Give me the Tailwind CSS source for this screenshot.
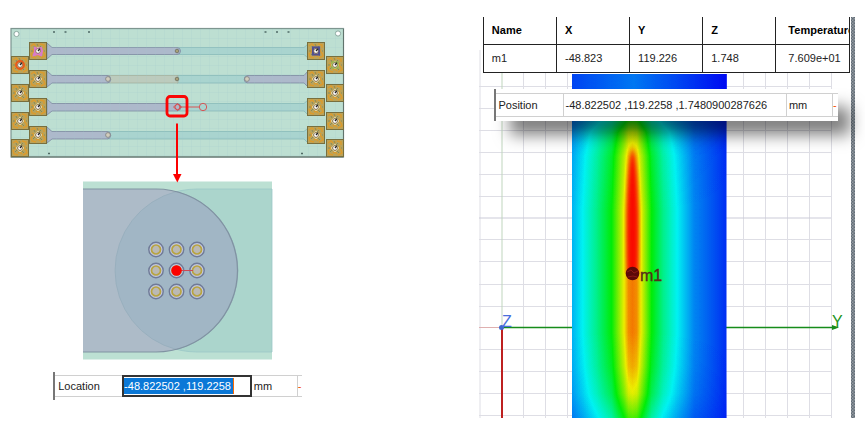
<!DOCTYPE html>
<html lang="en">
<head>
  <meta charset="UTF-8" />
  <meta name="viewport" content="width=device-width, initial-scale=1.0"/>
  <title>Via temperature marker</title>
  <script src="https://cdn.jsdelivr.net/npm/@tailwindcss/browser@4"></script>
</head>
<body class="bg-white text-[#222] font-['Liberation_Sans',Arial,sans-serif] text-[11px] leading-4">
  <main class="grid grid-cols-[355fr_124fr_386fr] pt-[17px]">

    <!-- Board layout and via detail -->
    <section class="col-start-1">
      <svg viewBox="0 17 355 344" class="block w-full" role="img" aria-label="Board layout with via detail">
        <defs>
          <pattern id="mesh" x="11" y="29" width="9" height="9" patternUnits="userSpaceOnUse">
            <path d="M0 0H9M0 0V9" stroke="#9dc6c9" stroke-width="0.7" opacity="0.45"/>
          </pattern>
          <g id="pad">
            <rect x="0.5" y="0.5" width="17" height="17" fill="#b9a35c" stroke="#796f3d"/>
            <path d="M2 4l3-2 2 2M11 2l4 1v3M2 11l1 4 4 1M15 11l1 3-4 2M3 7l2 2-2 2M14 7l-1 2 2 2M7 14l2-1 2 2M8 3h2" stroke="#dc9b2c" stroke-width="1.4" fill="none"/>
            <path d="M5 4l1 2M12 4l-2 2M4 13l2-2M13 14l-2-2M2 9h2M15 9h1M8 2l1 2" stroke="#858b5c" stroke-width="1" fill="none"/>
            <path d="M5 9l4-4 4 4-4 4Z" stroke="#d9cf9e" stroke-width="1" fill="none"/>
          </g>
          <g id="hole">
            <circle cx="9" cy="9" r="2.3" fill="#fff" stroke="#775f46" stroke-width="0.7"/>
            <path d="M9 9l2-2.4" stroke="#222" stroke-width="1.3"/>
          </g>
          <g id="via">
            <circle r="7.2" fill="#c3c8de" stroke="#6f7a97" stroke-width="1.4"/>
            <circle r="4.5" fill="#bbb9b4" stroke="#b8a440" stroke-width="1.7"/>
          </g>
        </defs>

        <rect x="11" y="28.5" width="332.5" height="128.5" fill="#bddfd2"/>

        <!-- Traces -->
        <g stroke-width="0.7">
          <g fill="#a9d4cf" stroke="#82b6b6">
            <path d="M177 47.5H304L308 44V58L304 54.5H177Z"/>
            <path d="M177 75.5H248V83H177Z"/>
            <path d="M177 103.5H304L308 100V115L304 111H177Z"/>
            <path d="M107 131.5H304L308 128V143L304 139H107Z"/>
          </g>
          <path d="M107 75.5H178V83H107Z" fill="#bccbbd" stroke="#a1ad9a"/>
          <g fill="#adb9cb" stroke="#74809a">
            <path d="M47 43L52 47.5H177a3.5 3.5 0 0 1 0 7H52L47 59Z"/>
            <path d="M47 71L52 75.5H107a3.7 3.7 0 0 1 0 7.5H52L47 87Z"/>
            <path d="M47 99L52 103.5H177a3.7 3.7 0 0 1 0 7.5H52L47 115Z"/>
            <path d="M47 127L52 131.5H107a3.7 3.7 0 0 1 0 7.5H52L47 143Z"/>
            <path d="M308 71L304 75.5H248a3.7 3.7 0 0 0 0 7.5H304L308 87Z"/>
          </g>
        </g>
        <rect x="11" y="28.5" width="332.5" height="128.5" fill="url(#mesh)"/>
        <rect x="11" y="28.5" width="332.5" height="128.5" fill="none" stroke="#7e9690" stroke-width="1.2"/>
        <path d="M11 157H343.5V29" fill="none" stroke="#62736d" stroke-width="1"/>

        <!-- Trace end vias -->
        <g stroke-width="0.8">
          <g fill="#a9a077" stroke="#6d6e60">
            <circle cx="177" cy="51" r="1.8"/><circle cx="177" cy="79" r="1.8"/>
          </g>
          <g fill="#d2cdbd" stroke="#7f8180">
            <circle cx="108" cy="79" r="2.4"/><circle cx="247" cy="79" r="2.4"/><circle cx="108" cy="135" r="2.4"/>
          </g>
        </g>

        <!-- Inner pads -->
        <g>
          <use href="#pad" x="29" y="42"/><use href="#pad" x="29" y="70"/>
          <use href="#pad" x="29" y="98"/><use href="#pad" x="29" y="126"/>
          <use href="#pad" x="307" y="42"/><use href="#pad" x="307" y="70"/>
          <use href="#pad" x="307" y="98"/><use href="#pad" x="307" y="126"/>
        </g>
        <!-- Outer pads -->
        <g>
          <use href="#pad" x="11" y="56"/><use href="#pad" x="11" y="84"/>
          <use href="#pad" x="11" y="112"/><use href="#pad" x="11" y="139"/>
          <use href="#pad" x="326" y="56"/><use href="#pad" x="326" y="84"/>
          <use href="#pad" x="326" y="112"/><use href="#pad" x="326" y="139"/>
        </g>
        <g fill="none" stroke-width="2.2">
          <path d="M35 48l2 1 4-1 1 3-1 4-3-1-4 1 1-3Z" stroke="#da7ac9"/>
          <circle cx="20" cy="65" r="3.8" stroke="#e75a1c"/>
          <rect x="313" y="47.5" width="6" height="7" stroke="#505092"/>
          <rect x="332" y="62" width="6" height="6" stroke="#94bd4e" stroke-width="1.2"/>
        </g>
        <g>
          <use href="#hole" x="29" y="42"/><use href="#hole" x="29" y="70"/>
          <use href="#hole" x="29" y="98"/><use href="#hole" x="29" y="126"/>
          <use href="#hole" x="307" y="42"/><use href="#hole" x="307" y="70"/>
          <use href="#hole" x="307" y="98"/><use href="#hole" x="307" y="126"/>
          <use href="#hole" x="11" y="56"/><use href="#hole" x="11" y="84"/>
          <use href="#hole" x="11" y="112"/><use href="#hole" x="11" y="139"/>
          <use href="#hole" x="326" y="56"/><use href="#hole" x="326" y="84"/>
          <use href="#hole" x="326" y="112"/><use href="#hole" x="326" y="139"/>
        </g>

        <!-- Mounting holes and fiducials -->
        <g fill="#fff" stroke="#8da9a1">
          <circle cx="16.5" cy="34" r="2.6"/><circle cx="338" cy="33.5" r="2.6"/>
        </g>
        <path d="M53 32h2M64.5 32h2M88 32h2M264.5 32h2M276 32h2M287.5 32h2M48 153.5h2M301 153.5h2" stroke="#4f6a65" stroke-width="1.5"/>

        <!-- Selected via and arrow to detail -->
        <g fill="none" stroke="#dd4747" stroke-width="0.9">
          <path d="M173.5 107l4-3.5 4 3.5-4 3.5ZM179 107H199"/>
          <circle cx="177.5" cy="107" r="2.5"/>
          <circle cx="203" cy="107" r="3.7"/>
        </g>
        <rect x="167" y="96.5" width="20" height="19.5" rx="3" fill="none" stroke="#fa0505" stroke-width="2.8"/>

        <rect x="83" y="181.5" width="189" height="178" fill="#bce0d3"/>
        <path d="M272 189H197a81.5 81.5 0 0 0 0 163H272Z" fill="#abd5cc" stroke="#9cc8c8" stroke-width="0.8"/>
        <path d="M83 189H156a81.5 81.5 0 0 1 0 163H83Z" fill="#adbbc8"/>
        <path d="M176.5 191.5A81.5 81.5 0 0 1 176.5 349.5A81.5 81.5 0 0 1 176.5 191.5Z" fill="#a1b6c5" stroke="#93acba" stroke-width="0.7"/>
        <path d="M83 189H156a81.5 81.5 0 0 1 0 163H83" fill="none" stroke="#8093a2" stroke-width="1.2"/>
        <g>
          <use href="#via" x="156" y="249.5"/><use href="#via" x="176.5" y="249.5"/><use href="#via" x="197" y="249.5"/>
          <use href="#via" x="156" y="270.5"/><use href="#via" x="176.5" y="270.5"/><use href="#via" x="197" y="270.5"/>
          <use href="#via" x="156" y="291.5"/><use href="#via" x="176.5" y="291.5"/><use href="#via" x="197" y="291.5"/>
        </g>
        <path d="M177 270.5H193" stroke="#cc4a55" stroke-width="1"/>
        <circle cx="176.5" cy="270.5" r="5.2" fill="#fc0000"/>
        <path d="M177 123.5V175" stroke="#fc0000" stroke-width="2"/>
        <path d="M173 174h8.5L177.3 182.5Z" fill="#fc0000"/>
      </svg>

      <!-- Location property -->
      <div class="mt-[11px] ml-[15%] w-[70%] border-l-2 border-[#777]">
        <div class="grid grid-cols-[67fr_130fr_46fr_4fr] h-7 py-[3px]">
          <label for="location" class="flex items-center border-y border-[#d0d0d0] pl-[3px]">Location</label>
          <div class="flex items-center border-2 border-[#333] h-[22px]">
            <input id="location" type="text" value="-48.822502 ,119.2258" class="w-[110px] h-4 bg-[#0b78d7] text-white border-r border-orange-500 outline-none"/>
          </div>
          <span class="flex items-center border-y border-r border-[#d0d0d0] pl-[2px]">mm</span>
          <span class="flex items-center border-y border-[#d0d0d0] text-orange-600">-</span>
        </div>
      </div>
    </section>

    <!-- Temperature plot -->
    <section class="col-start-3 relative overflow-hidden">
      <svg viewBox="479 17 386 401" class="block w-full" role="img" aria-label="Temperature plot with marker m1">
        <defs>
          <linearGradient id="across">
            <stop offset="0" stop-color="#2e2e2e"/>
            <stop offset="0.07" stop-color="#404040"/>
            <stop offset="0.16" stop-color="#5c5c5c"/>
            <stop offset="0.257" stop-color="#808080"/>
            <stop offset="0.337" stop-color="#bfbfbf"/>
            <stop offset="0.365" stop-color="#dadada"/>
            <stop offset="0.39" stop-color="#e0e0e0"/>
            <stop offset="0.42" stop-color="#dadada"/>
            <stop offset="0.447" stop-color="#bfbfbf"/>
            <stop offset="0.515" stop-color="#808080"/>
            <stop offset="0.59" stop-color="#5c5c5c"/>
            <stop offset="0.68" stop-color="#404040"/>
            <stop offset="0.79" stop-color="#222"/>
            <stop offset="1" stop-color="#0a0a0a"/>
          </linearGradient>
          <linearGradient id="along" x2="0" y2="1">
            <stop offset="0" stop-opacity="0.8"/>
            <stop offset="0.06" stop-opacity="0.8"/>
            <stop offset="0.13" stop-opacity="0.42"/>
            <stop offset="0.17" stop-opacity="0.2"/>
            <stop offset="0.24" stop-opacity="0.08"/>
            <stop offset="0.4" stop-opacity="0"/>
            <stop offset="0.75" stop-opacity="0"/>
            <stop offset="0.85" stop-opacity="0.06"/>
            <stop offset="0.93" stop-opacity="0.16"/>
            <stop offset="1" stop-opacity="0.34"/>
          </linearGradient>
          <linearGradient id="top">
            <stop offset="0" stop-color="#101010"/>
            <stop offset="0.4" stop-color="#1e1e1e"/>
            <stop offset="0.65" stop-color="#121212"/>
            <stop offset="1" stop-color="#000"/>
          </linearGradient>
          <filter id="soft" x="-1" y="-0.2" width="3" height="1.4">
            <feGaussianBlur stdDeviation="2 4"/>
          </filter>
          <clipPath id="core">
            <rect x="615" y="122" width="35" height="151"/>
          </clipPath>
          <!-- grey level to rainbow scale -->
          <filter id="rainbow" x="0" y="0" width="1" height="1" color-interpolation-filters="sRGB">
            <feComponentTransfer>
              <feFuncR type="table" tableValues="0 0 0 0.93 0.98"/>
              <feFuncG type="table" tableValues="0.04 0.95 0.93 0.93 0.04"/>
              <feFuncB type="table" tableValues="0.95 0.95 0.03 0 0"/>
            </feComponentTransfer>
          </filter>
          <pattern id="hatch" width="3" height="3" patternUnits="userSpaceOnUse">
            <rect width="3" height="3" fill="#929aa1"/>
            <path d="M0 0h1.5v1.5H0zM1.5 1.5H3V3H1.5z" fill="#626c76"/>
          </pattern>
        </defs>

        <!-- Grid -->
        <path d="M480 50V418M523.5 50V418M545.5 50V418M567.5 50V418M743.5 50V418M765.5 50V418M787.5 50V418M809.5 50V418M831.5 50V418M479 86.5H831M479 108.5H831M479 130.5H831M479 152.5H831M479 174.5H831M479 196.5H831M479 239.5H831M479 261.5H831M479 284.5H831M479 306.5H831M479 349.5H831M479 371.5H831M479 393.5H831M479 415.5H831" stroke="#dedee5" stroke-width="1"/>
        <path d="M479 218H831" stroke="#cbcbd8"/>
        <path d="M502 50V327" stroke="#bfd5bd"/>
        <path d="M479 327.5H502" stroke="#dfb0b0"/>

        <path d="M502 327.5H836" stroke="#168c1b" stroke-width="1.7"/>
        <path d="M832 325l7 2.5-7 2.5Z" fill="#168c1b"/>
        <path d="M502 328V418" stroke="#bd2020" stroke-width="2"/>
        <circle cx="501.5" cy="327.5" r="2.5" fill="#4068ce"/>
        <text x="502" y="327" font-size="16" fill="#4970dc">Z</text>
        <text x="832" y="327" font-size="16" fill="#229321">Y</text>

        <!-- Heat map -->
        <g filter="url(#rainbow)">
          <rect x="572" y="74" width="154.5" height="344" fill="url(#across)"/>
          <rect x="572" y="74" width="154.5" height="344" fill="url(#along)"/>
          <rect x="572" y="74" width="154.5" height="20" fill="url(#top)"/>
          <g clip-path="url(#core)">
            <ellipse cx="632.5" cy="235" rx="5.5" ry="85" fill="#fff" filter="url(#soft)"/>
          </g>
        </g>

        <!-- Marker -->
        <circle cx="632.5" cy="273.5" r="6.8" fill="#5d0909"/>
        <path d="M627 272l4-2 3 3 4-2M628 277l5-1 4 1" stroke="#8e1a15" stroke-width="1" fill="none"/>
        <text x="640" y="281" font-size="16" fill="#54301a" stroke="#54301a" stroke-width="0.4">m1</text>

        <rect x="851" y="17" width="4" height="401" fill="url(#hatch)"/>
      </svg>

      <!-- Marker table -->
      <table class="absolute top-0 left-[1%] w-[95%] table-fixed border-collapse bg-white text-left">
        <thead>
          <tr class="h-[27px]">
            <th class="w-[20%] border border-t-0 border-[#222] pl-2 text-black">Name</th>
            <th class="w-[20%] border border-t-0 border-[#222] pl-2 text-black">X</th>
            <th class="w-[20%] border border-t-0 border-[#222] pl-2 text-black">Y</th>
            <th class="w-[20%] border border-t-0 border-[#222] pl-2 text-black">Z</th>
            <th class="border border-t-0 border-[#222] pl-3 text-black overflow-hidden">Temperature</th>
          </tr>
        </thead>
        <tbody>
          <tr class="h-7">
            <td class="border border-[#222] pl-2">m1</td>
            <td class="border border-[#222] pl-2">-48.823</td>
            <td class="border border-[#222] pl-2">119.226</td>
            <td class="border border-[#222] pl-2">1.748</td>
            <td class="border border-[#222] pl-3">7.609e+01</td>
          </tr>
        </tbody>
      </table>

      <!-- Position property -->
      <div class="absolute top-[72px] left-[4%] w-[89%] h-8 py-1 grid grid-cols-[67fr_223fr_46fr_5fr] bg-white border-l-2 border-[#777] shadow-[14px_16px_16px_-2px_rgba(0,0,0,0.5)]">
        <span class="flex items-center border-y border-r border-[#d0d0d0] pl-[2px]">Position</span>
        <span class="flex items-center border-y border-r border-[#d0d0d0] pl-[2px] whitespace-nowrap">-48.822502 ,119.2258 ,1.7480900287626</span>
        <span class="flex items-center border-y border-r border-[#d0d0d0] pl-[2px]">mm</span>
        <span class="flex items-center border-y border-[#d0d0d0] text-orange-600">-</span>
      </div>
    </section>
  </main>
</body>
</html>
